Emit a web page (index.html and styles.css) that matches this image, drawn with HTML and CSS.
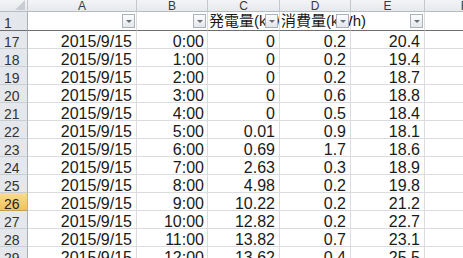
FILE: index.html
```html
<!DOCTYPE html>
<html lang="ja">
<head>
    <meta charset="UTF-8">
    <meta name="viewport" content="width=device-width, initial-scale=1.0">
    <title>発電量</title>
    <link rel="stylesheet" href="styles.css">
</head>
<body>
    <div class="sheet">
        <div class="row col-head">
            <div class="corner"><span class="corner-tri"></span></div>
            <div class="ch c-a">A</div>
            <div class="ch c-b">B</div>
            <div class="ch c-c">C</div>
            <div class="ch c-d">D</div>
            <div class="ch c-e">E</div>
            <div class="ch c-f">F</div>
        </div>
        <div class="row head-row">
            <div class="rh">1</div>
            <div class="cell c-a"><span class="filter"></span></div>
            <div class="cell c-b"><span class="filter"></span></div>
            <div class="cell c-c clip"><span class="label">発電量(kWh)</span><span class="filter"></span></div>
            <div class="cell c-d"><span class="label">消費量(kWh)</span><span class="filter"></span></div>
            <div class="cell c-e"><span class="filter"></span></div>
            <div class="cell c-f"></div>
        </div>
        <div class="row"><div class="rh">17</div><div class="cell c-a">2015/9/15</div><div class="cell c-b">0:00</div><div class="cell c-c">0</div><div class="cell c-d">0.2</div><div class="cell c-e">20.4</div><div class="cell c-f"></div></div>
        <div class="row"><div class="rh">18</div><div class="cell c-a">2015/9/15</div><div class="cell c-b">1:00</div><div class="cell c-c">0</div><div class="cell c-d">0.2</div><div class="cell c-e">19.4</div><div class="cell c-f"></div></div>
        <div class="row"><div class="rh">19</div><div class="cell c-a">2015/9/15</div><div class="cell c-b">2:00</div><div class="cell c-c">0</div><div class="cell c-d">0.2</div><div class="cell c-e">18.7</div><div class="cell c-f"></div></div>
        <div class="row"><div class="rh">20</div><div class="cell c-a">2015/9/15</div><div class="cell c-b">3:00</div><div class="cell c-c">0</div><div class="cell c-d">0.6</div><div class="cell c-e">18.8</div><div class="cell c-f"></div></div>
        <div class="row"><div class="rh">21</div><div class="cell c-a">2015/9/15</div><div class="cell c-b">4:00</div><div class="cell c-c">0</div><div class="cell c-d">0.5</div><div class="cell c-e">18.4</div><div class="cell c-f"></div></div>
        <div class="row"><div class="rh">22</div><div class="cell c-a">2015/9/15</div><div class="cell c-b">5:00</div><div class="cell c-c">0.01</div><div class="cell c-d">0.9</div><div class="cell c-e">18.1</div><div class="cell c-f"></div></div>
        <div class="row"><div class="rh">23</div><div class="cell c-a">2015/9/15</div><div class="cell c-b">6:00</div><div class="cell c-c">0.69</div><div class="cell c-d">1.7</div><div class="cell c-e">18.6</div><div class="cell c-f"></div></div>
        <div class="row"><div class="rh">24</div><div class="cell c-a">2015/9/15</div><div class="cell c-b">7:00</div><div class="cell c-c">2.63</div><div class="cell c-d">0.3</div><div class="cell c-e">18.9</div><div class="cell c-f"></div></div>
        <div class="row"><div class="rh">25</div><div class="cell c-a">2015/9/15</div><div class="cell c-b">8:00</div><div class="cell c-c">4.98</div><div class="cell c-d">0.2</div><div class="cell c-e">19.8</div><div class="cell c-f"></div></div>
        <div class="row"><div class="rh sel">26</div><div class="cell c-a">2015/9/15</div><div class="cell c-b">9:00</div><div class="cell c-c">10.22</div><div class="cell c-d">0.2</div><div class="cell c-e">21.2</div><div class="cell c-f"></div></div>
        <div class="row"><div class="rh">27</div><div class="cell c-a">2015/9/15</div><div class="cell c-b">10:00</div><div class="cell c-c">12.82</div><div class="cell c-d">0.2</div><div class="cell c-e">22.7</div><div class="cell c-f"></div></div>
        <div class="row"><div class="rh">28</div><div class="cell c-a">2015/9/15</div><div class="cell c-b">11:00</div><div class="cell c-c">13.82</div><div class="cell c-d">0.7</div><div class="cell c-e">23.1</div><div class="cell c-f"></div></div>
        <div class="row"><div class="rh">29</div><div class="cell c-a">2015/9/15</div><div class="cell c-b">12:00</div><div class="cell c-c">13.62</div><div class="cell c-d">0.4</div><div class="cell c-e">25.5</div><div class="cell c-f"></div></div>
    </div>
</body>
</html>
```

FILE: styles.css
```css
html, body {
    margin: 0;
    height: 258px;
    overflow: hidden;
    background: #fff;
}
.sheet {
    font-family: "Liberation Sans", "Noto Sans CJK JP", sans-serif;
    font-size: 16px;
    color: #1a1a1a;
    width: 463px;
    overflow: hidden;
}
.row {
    display: flex;
    height: 18px;
}
.row > div {
    flex-shrink: 0;
    box-sizing: border-box;
    border-right: 1px solid #dadcdf;
    border-bottom: 1px solid #dadcdf;
}
.c-a { width: 109px; }
.c-b { width: 71px; }
.c-c { width: 72px; }
.c-d { width: 71px; }
.c-e { width: 74px; }
.c-f { width: 80px; }

/* column letters */
.col-head {
    height: 12px;
}
.col-head > div {
    background: linear-gradient(#f3f4f6, #e6e9ed);
    border-right-color: #c4c8ce;
    border-bottom-color: #b7bcc3;
}
.ch {
    font-size: 12px;
    line-height: 12px;
    text-align: center;
    color: #3a3a3a;
}
.corner {
    width: 28px;
    position: relative;
}
.corner-tri {
    position: absolute;
    right: 2px;
    bottom: 1px;
    width: 0;
    height: 0;
    border-left: 10px solid transparent;
    border-bottom: 10px solid #c9cdd3;
}

/* row numbers */
.rh {
    width: 28px;
    background: #e4e7eb;
    border-right-color: #a9afb7 !important;
    border-bottom-color: #c9ced5 !important;
    font-size: 14px;
    line-height: 17px;
    padding: 3px 0 0 4px;
    color: #333;
}
.rh.sel {
    background: linear-gradient(#f9dc95, #f2c25c);
    border-bottom-color: #c7a04d !important;
    color: #222;
}

/* data cells */
.cell {
    text-align: right;
    line-height: 15px;
    padding: 3px 4px 0 0;
    white-space: nowrap;
}
.c-b.cell { padding-right: 3px; }

/* filter header row */
.head-row {
    height: 19px;
}
.head-row > div {
    border-bottom: 1px solid #6e6e6e;
    position: relative;
}
.head-row .rh {
    border-bottom-color: #6e6e6e !important;
}
.head-row .cell {
    text-align: left;
    font-size: 15px;
    padding: 0 0 0 1px;
    line-height: 18px;
}
.head-row .clip {
    overflow: hidden;
}
.filter {
    position: absolute;
    right: 1px;
    top: 2px;
    width: 13px;
    height: 14px;
    box-sizing: border-box;
    border: 1px solid #aab1ba;
    background: linear-gradient(#fdfdfe, #e3e6ea);
}
.filter::after {
    content: "";
    position: absolute;
    left: 3px;
    top: 5px;
    border-left: 3px solid transparent;
    border-right: 3px solid transparent;
    border-top: 3px solid #6b6f75;
}
```
